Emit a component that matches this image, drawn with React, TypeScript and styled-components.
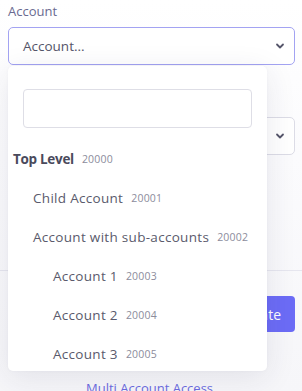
import React from "react";
import styled, { createGlobalStyle } from "styled-components";

const Global = createGlobalStyle`
  html, body { margin: 0; padding: 0; }
  body {
    font-family: "Open Sans", "Noto Sans", sans-serif;
    background: #ffffff;
    width: 302px;
    height: 391px;
    overflow: hidden;
  }
  * { box-sizing: border-box; }
`;

const Page = styled.div`
  position: relative;
  width: 302px;
  height: 391px;
  overflow: hidden;
  background: linear-gradient(180deg, #ffffff 0%, #fbfbfd 40%, #f6f6f9 100%);
  padding: 0 7px 0 8px;
  display: flex;
  flex-direction: column;
  & > * { flex-shrink: 0; }
`;

const Label = styled.div`
  font-size: 13px;
  color: #6a6a90;
  height: 27px;
  line-height: 22px;
`;

const Select = styled.div<{ $focused?: boolean }>`
  height: 38px;
  border: 1px solid ${(p) => (p.$focused ? "#a3a3f2" : "#dcdce6")};
  border-radius: 5px;
  background: #fff;
  display: flex;
  align-items: center;
  justify-content: space-between;
  padding: 0 8px 0 14px;
  font-size: 13.5px;
  color: #55556a;
`;

const Spacer = styled.div<{ $h: number }>`
  height: ${(p) => p.$h}px;
`;

const Divider = styled.div`
  height: 1px;
  background: #e6e6ef;
  margin: 0 -7px 0 -8px;
`;

const ButtonRow = styled.div`
  display: flex;
  justify-content: flex-end;
`;

const Button = styled.div`
  width: 100px;
  height: 36px;
  border-radius: 4px;
  background: #6c6cf6;
  color: #fff;
  font-size: 14px;
  display: flex;
  align-items: center;
  justify-content: flex-end;
  padding-right: 14px;
`;

const Link = styled.div`
  text-align: center;
  color: #6b6be0;
  font-size: 13px;
  line-height: 18px;
  padding-right: 4px;
`;

const Menu = styled.div`
  position: absolute;
  left: 8px;
  top: 66px;
  width: 259px;
  height: 305px;
  background: #fff;
  border-radius: 5px;
  box-shadow: 0 6px 30px rgba(40, 40, 80, 0.1), 0 0 3px rgba(40, 40, 80, 0.04);
  padding: 23px 0 0 0;
  display: flex;
  flex-direction: column;
`;

const Search = styled.div`
  margin: 0 15px 0 15px;
  height: 39px;
  border: 1px solid #dedee6;
  border-radius: 4px;
  flex-shrink: 0;
`;

const List = styled.div`
  margin-top: 11px;
  display: flex;
  flex-direction: column;
`;

const Item = styled.div<{ $level: number }>`
  height: 39px;
  display: flex;
  align-items: center;
  padding-left: ${(p) => 5 + p.$level * 20}px;
  color: #5a5a6c;
  font-size: 13.5px;
  letter-spacing: 0.3px;
  font-weight: ${(p) => (p.$level === 0 ? 700 : 400)};
  ${(p) => (p.$level === 0 ? "color: #4a4a5c; letter-spacing: -0.3px;" : "")}
`;

const Code = styled.span`
  font-size: 10.5px;
  color: #8c8c9c;
  margin-left: 8px;
  font-weight: 400;
  letter-spacing: 0.2px;
`;

const Chevron = () => (
  <svg width="12" height="12" viewBox="0 0 12 12">
    <path d="M3 4.5 L6 7.5 L9 4.5" fill="none" stroke="#55556a" strokeWidth="1.8" strokeLinecap="round" strokeLinejoin="round" />
  </svg>
);

const items = [
  { name: "Top Level", code: "20000", level: 0 },
  { name: "Child Account", code: "20001", level: 1 },
  { name: "Account with sub-accounts", code: "20002", level: 1 },
  { name: "Account 1", code: "20003", level: 2 },
  { name: "Account 2", code: "20004", level: 2 },
  { name: "Account 3", code: "20005", level: 2 },
];

export default function App() {
  return (
    <Page>
      <Global />
      <Label>Account</Label>
      <Select $focused>
        <span>Account...</span>
        <Chevron />
      </Select>
      <Spacer $h={25} />
      <Label>Role</Label>
      <Select>
        <span>Role...</span>
        <Chevron />
      </Select>
      <Spacer $h={115} />
      <Divider />
      <Spacer $h={25} />
      <ButtonRow>
        <Button>Update</Button>
      </ButtonRow>
      <Spacer $h={47} />
      <Link>Multi Account Access</Link>
      <Menu>
        <Search />
        <List>
          {items.map((it) => (
            <Item key={it.code} $level={it.level}>
              {it.name}
              <Code>{it.code}</Code>
            </Item>
          ))}
        </List>
      </Menu>
    </Page>
  );
}
